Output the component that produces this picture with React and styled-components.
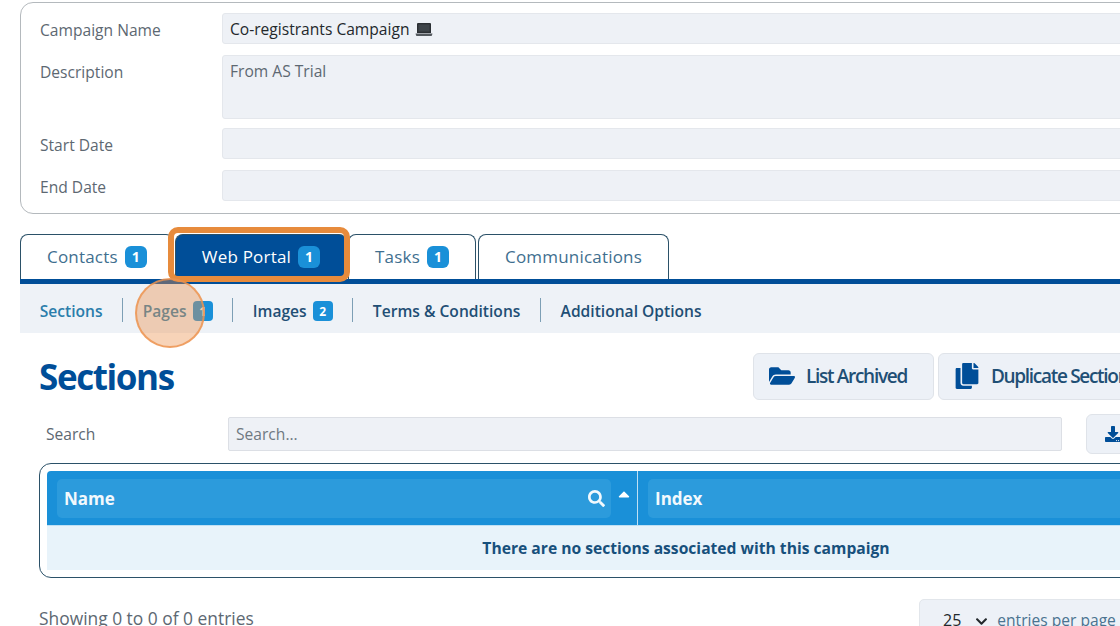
import React from 'react';
import styled, { createGlobalStyle } from 'styled-components';
import { FaFolderOpen, FaCopy, FaSearch, FaDownload, FaCaretUp, FaChevronDown } from 'react-icons/fa';

const GlobalStyle = createGlobalStyle`
  html, body {
    margin: 0;
    height: 626px;
    overflow: hidden;
    background: #fff;
    font-family: "Open Sans", "Liberation Sans", sans-serif;
  }
`;

const Laptop = () => (
  <LaptopIcon viewBox="0 0 18 15">
    <path d="M3 1h12a1 1 0 0 1 1 1v9H2V2a1 1 0 0 1 1-1z" fill="#2b2f33" />
    <path d="M3.4 2.4h11.2v7.2H3.4z" fill="#3e4449" />
    <path d="M.5 11.5h17l-.6 2.1a.6.6 0 0 1-.6.4H1.700a.6.6 0 0 1-.6-.4z" fill="#54595e" />
  </LaptopIcon>
);

const App = () => {
  return (
    <Page>
      <GlobalStyle />
      <DetailsPanel>
        <FieldRow>
          <FieldLabel>Campaign Name</FieldLabel>
          <Field $dark>
            Co-registrants Campaign <Laptop />
          </Field>
        </FieldRow>
        <FieldRow $tall>
          <FieldLabel>Description</FieldLabel>
          <Field $tall>From AS Trial</Field>
        </FieldRow>
        <FieldRow>
          <FieldLabel>Start Date</FieldLabel>
          <Field />
        </FieldRow>
        <FieldRow>
          <FieldLabel>End Date</FieldLabel>
          <Field />
        </FieldRow>
      </DetailsPanel>

      <Tabs>
        <Tab>
          Contacts <Badge>1</Badge>
        </Tab>
        <Tab $active>
          Web Portal <Badge>1</Badge>
          <Highlight />
        </Tab>
        <Tab>
          Tasks <Badge>1</Badge>
        </Tab>
        <Tab>Communications</Tab>
      </Tabs>

      <SubNav>
        <SubItem $current>Sections</SubItem>
        <SubItem $current>
          Pages <SmallBadge>1</SmallBadge>
        </SubItem>
        <SubItem>
          Images <SmallBadge>2</SmallBadge>
        </SubItem>
        <SubItem>Terms &amp; Conditions</SubItem>
        <SubItem>Additional Options</SubItem>
        <ClickMarker />
      </SubNav>

      <Content>
        <HeadingRow>
          <Heading>Sections</Heading>
          <ActionButton>
            <FaFolderOpen size={26} color="#004e98" />
            List Archived
          </ActionButton>
          <ActionButton>
            <FaCopy size={26} color="#004e98" />
            Duplicate Sections
          </ActionButton>
        </HeadingRow>

        <SearchRow>
          <SearchLabel>Search</SearchLabel>
          <SearchInput>Search...</SearchInput>
          <ExportButton>
            <FaDownload size={16} color="#004e98" />
            Export
          </ExportButton>
        </SearchRow>

        <TableFrame>
          <HeaderRow>
            <HeaderCell $width={591}>
              <HeaderBox>
                Name
                <FaSearch size={17} />
              </HeaderBox>
              <SortCaret>
                <FaCaretUp size={18} />
              </SortCaret>
            </HeaderCell>
            <HeaderCell>
              <HeaderBox>Index</HeaderBox>
            </HeaderCell>
          </HeaderRow>
          <EmptyRow>There are no sections associated with this campaign</EmptyRow>
        </TableFrame>

        <Footer>
          <Showing>Showing 0 to 0 of 0 entries</Showing>
          <PageSize>
            <span>25</span>
            <FaChevronDown size={13} color="#22272b" />
            <PageSizeLabel>entries per page</PageSizeLabel>
          </PageSize>
        </Footer>
      </Content>
    </Page>
  );
};

const Page = styled.div`
  width: 1333px;
  padding: 2px 0 0 20px;
  box-sizing: border-box;
`;

const DetailsPanel = styled.div`
  box-sizing: border-box;
  height: 212px;
  padding: 10px 19px;
  border: 1px solid #b4b9bd;
  border-radius: 13px;
  display: flex;
  flex-direction: column;
  gap: 11px;
`;

const FieldRow = styled.div`
  display: grid;
  grid-template-columns: 182px 1fr;
  margin-bottom: ${p => (p.$tall ? '-2px' : '0')};
`;

const FieldLabel = styled.div`
  box-sizing: border-box;
  height: 31px;
  padding-top: 2px;
  font-size: 15.6px;
  line-height: 31px;
  color: #5d6872;
`;

const Field = styled.div`
  box-sizing: border-box;
  height: ${p => (p.$tall ? '64px' : '31px')};
  padding: 0 7px;
  background: #eef1f6;
  border: 1px solid #e4e7ec;
  border-radius: 3px;
  font-size: 15.6px;
  line-height: 31px;
  color: ${p => (p.$dark ? '#23282c' : '#5d6872')};
`;

const LaptopIcon = styled.svg`
  width: 18px;
  height: 15px;
  margin-left: 1px;
  vertical-align: -2px;
`;

const Tabs = styled.div`
  display: flex;
  gap: 1px;
  margin-top: 20px;
  height: 45px;
`;

const Tab = styled.div`
  position: relative;
  box-sizing: border-box;
  display: flex;
  align-items: center;
  gap: 7px;
  padding: 0 26px 1px;
  border: 1px solid #2b5168;
  border-bottom: none;
  border-radius: 8px 8px 0 0;
  font-size: 17px;
  letter-spacing: 0.2px;
  color: ${p => (p.$active ? '#fff' : '#3f6f8f')};
  background: ${p => (p.$active ? '#004e98' : '#fff')};
  &:last-child {
    margin-left: 1px;
  }
`;

const Badge = styled.span`
  width: 22px;
  height: 22px;
  border-radius: 6px;
  background: #1a90d8;
  color: #fff;
  font-size: 14px;
  font-weight: 700;
  letter-spacing: 0;
  display: flex;
  align-items: center;
  justify-content: center;
`;

const Highlight = styled.div`
  position: absolute;
  z-index: 1;
  left: -8px;
  right: -4px;
  top: -8px;
  bottom: -3px;
  border: 6px solid #e78b3c;
  border-radius: 10px;
  pointer-events: none;
`;

const SubNav = styled.div`
  position: relative;
  box-sizing: border-box;
  height: 54px;
  padding: 14px 0 0 0;
  background: #eef2f7;
  border-top: 5px solid #004e98;
  display: flex;
  align-items: flex-start;
`;

const SubItem = styled.div`
  box-sizing: border-box;
  height: 24px;
  display: flex;
  align-items: center;
  gap: 6px;
  padding: 2px 19.500px 0 19.700px;
  border-left: 1px solid #7d9fb5;
  font-size: 15.6px;
  font-weight: 600;
  color: ${p => (p.$current ? '#2a7dab' : '#1f4f75')};
  &:first-child {
    border-left: none;
  }
`;

const SmallBadge = styled.span`
  width: 20px;
  height: 20px;
  border-radius: 4px;
  background: #1a90d8;
  color: #fff;
  font-size: 12px;
  font-weight: 700;
  display: flex;
  align-items: center;
  justify-content: center;
`;

const ClickMarker = styled.div`
  position: absolute;
  z-index: 1;
  left: 115px;
  top: -6px;
  box-sizing: border-box;
  width: 70px;
  height: 70px;
  border-radius: 50%;
  background: rgba(236, 146, 78, 0.4);
  border: 2.500px solid rgba(236, 146, 78, 0.8);
  pointer-events: none;
`;

const Content = styled.div`
  padding: 20px 0 0 19px;
`;

const HeadingRow = styled.div`
  display: flex;
  align-items: center;
  gap: 4px;
  height: 47px;
`;

const Heading = styled.h1`
  margin: 0;
  width: 710px;
  font-size: 35px;
  font-weight: 700;
  letter-spacing: -1.400px;
  color: #004e98;
`;

const ActionButton = styled.div`
  box-sizing: border-box;
  height: 47px;
  padding: 0 26px 2px 15px;
  display: flex;
  align-items: center;
  gap: 11px;
  flex: none;
  background: #edf1f7;
  border: 1px solid #dfe3e9;
  border-radius: 6px;
  font-size: 19px;
  font-weight: 600;
  letter-spacing: -1.300px;
  color: #1f4f75;
`;

const SearchRow = styled.div`
  display: flex;
  align-items: center;
  height: 40px;
  margin-top: 14px;
`;

const SearchLabel = styled.div`
  width: 189px;
  padding: 0 0 1px 7px;
  box-sizing: border-box;
  font-size: 15.6px;
  color: #5d6872;
`;

const SearchInput = styled.div`
  box-sizing: border-box;
  width: 834px;
  height: 34px;
  padding: 0 7px;
  background: #eef1f6;
  border: 1px solid #dcdfe5;
  border-radius: 2px;
  font-size: 15.6px;
  line-height: 32px;
  color: #6f7982;
`;

const ExportButton = styled.div`
  box-sizing: border-box;
  height: 40px;
  margin-left: 24px;
  padding: 0 18px;
  display: flex;
  align-items: center;
  gap: 10px;
  background: #edf1f7;
  border: 1px solid #dfe3e9;
  border-radius: 6px;
  font-size: 16px;
  font-weight: 600;
  color: #1f4f75;
`;

const TableFrame = styled.div`
  box-sizing: border-box;
  height: 115px;
  margin-top: 9px;
  padding: 7px;
  border: 1px solid #2b5168;
  border-radius: 12px;
`;

const HeaderRow = styled.div`
  display: flex;
  height: 55px;
  background: #1a90d8;
  border-radius: 4px 4px 0 0;
  border-bottom: 1px solid #bfe0f4;
  box-sizing: border-box;
`;

const HeaderCell = styled.div`
  position: relative;
  box-sizing: border-box;
  flex: ${p => (p.$width ? `0 0 ${p.$width}px` : '1')};
  padding: 8px ${p => (p.$width ? '26px' : '10px')} 7px 10px;
  border-right: ${p => (p.$width ? '1px solid #bfe0f4' : 'none')};
  display: flex;
`;

const HeaderBox = styled.div`
  flex: 1;
  display: flex;
  align-items: center;
  justify-content: space-between;
  padding: 0 6px 0 7px;
  background: #2c9bdc;
  border-radius: 5px;
  font-size: 17px;
  font-weight: 700;
  color: #f2f9fd;
`;

const SortCaret = styled.span`
  position: absolute;
  right: 4px;
  top: 14px;
  color: #fff;
  display: flex;
`;

const EmptyRow = styled.div`
  height: 44px;
  background: #e8f3fa;
  display: flex;
  align-items: center;
  justify-content: center;
  font-size: 15.650px;
  font-weight: 700;
  color: #17507c;
`;

const Footer = styled.div`
  display: flex;
  align-items: flex-start;
  margin-top: 21px;
`;

const Showing = styled.div`
  width: 880px;
  padding-top: 7px;
  font-size: 17.4px;
  color: #5d6872;
`;

const PageSize = styled.div`
  box-sizing: border-box;
  height: 44px;
  padding: 9px 0 0 23px;
  display: flex;
  align-items: flex-start;
  gap: 14px;
  background: #edf1f7;
  border: 1px solid #e2e6eb;
  border-radius: 5px;
  font-size: 16px;
  color: #23282c;
  svg {
    margin-top: 6px;
  }
`;

const PageSizeLabel = styled.span`
  margin-left: -5px;
  padding-right: 20px;
  font-size: 15.6px;
  color: #4a7390;
`;

export default App;
